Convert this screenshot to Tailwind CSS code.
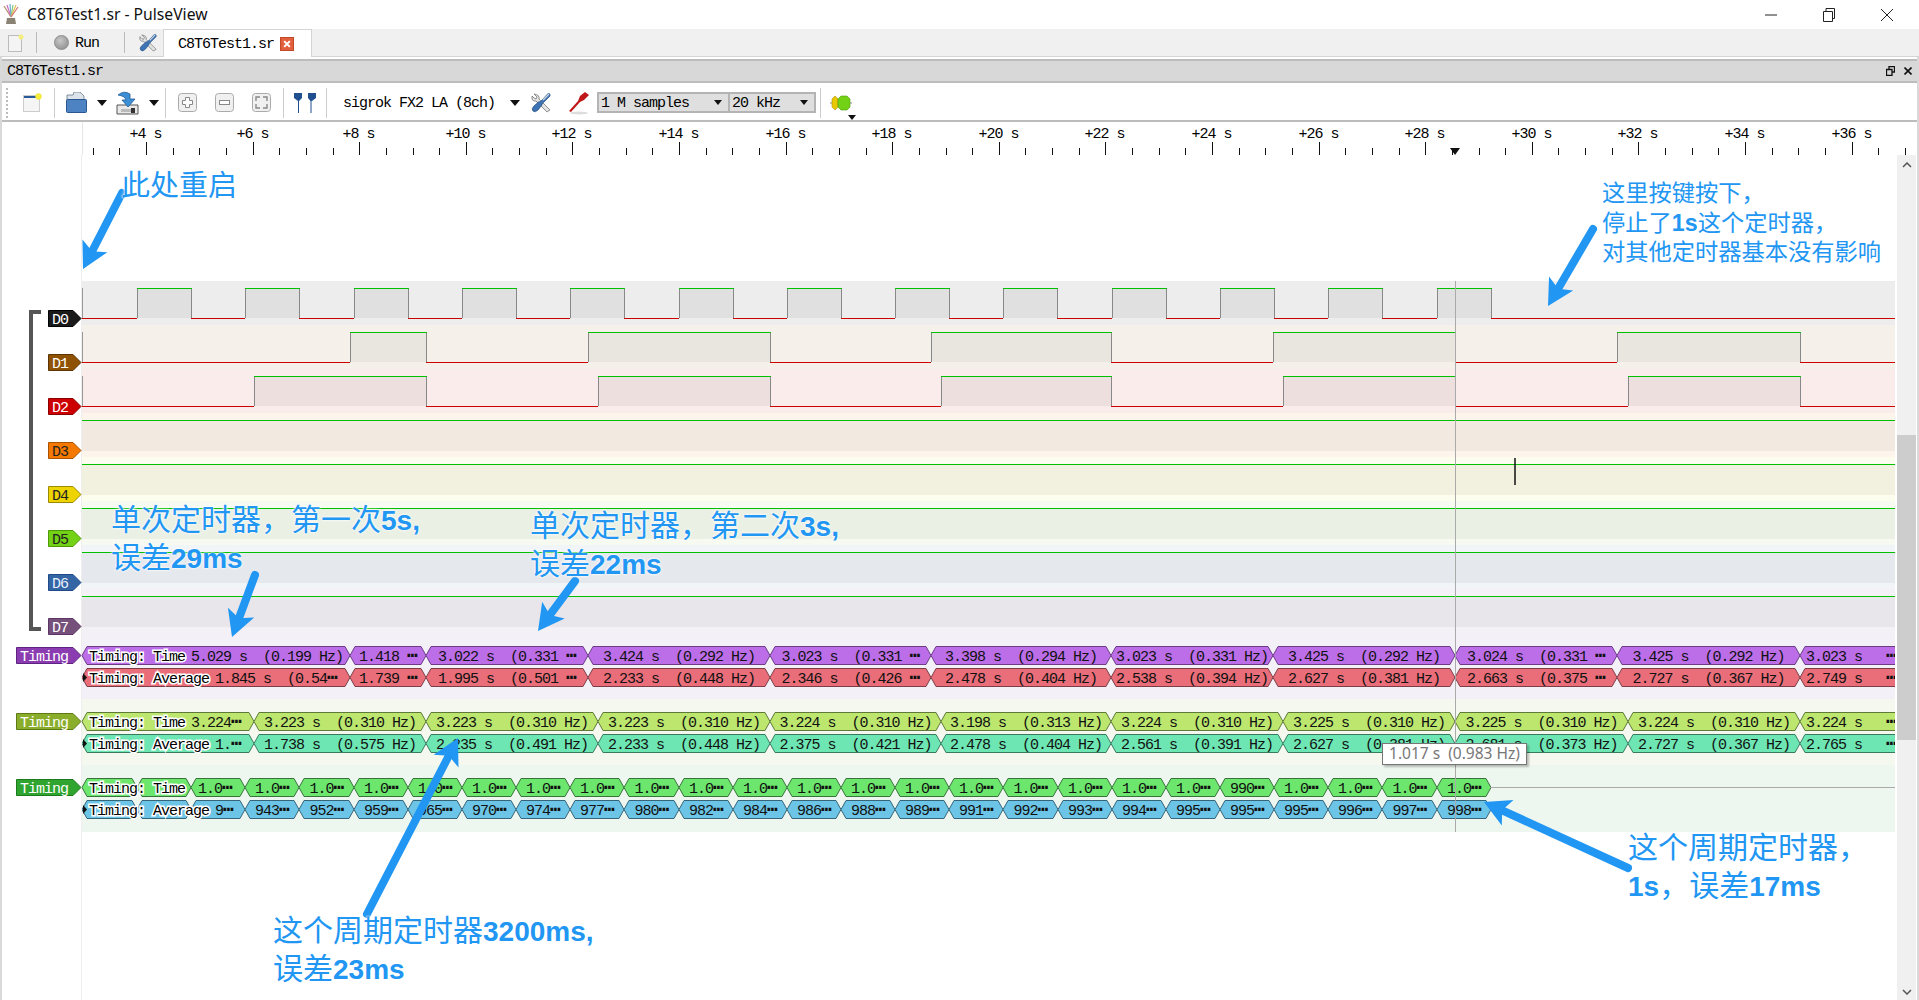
<!DOCTYPE html>
<html lang="zh">
<head>
<meta charset="UTF-8">
<title>C8T6Test1.sr - PulseView</title>
<script src="https://cdn.jsdelivr.net/npm/@tailwindcss/browser@4"></script>
</head>
<body class="bg-white">
<svg width="0" height="0" class="absolute">
  <defs>
    <symbol id="tools" viewBox="0 0 20 20">
      <path d="M3 1 L6 4 L5 6 L3 5 L1 3 Q0 7 3 8 L5 8 L16 19 L19 17 L8 6 Q9 2 3 1Z" fill="#e4e4e4" stroke="#777" stroke-width="0.8"/>
      <path d="M19 1 L17 0.5 L12 6 L9 9 L8 8.500 L3 13 Q0 16 2 18 Q4 20 7 17 L11 12 L11 11 L14 8 L19 3Z" fill="#3e74b5" stroke="#24507f" stroke-width="0.7"/>
      <path d="M18 1 L12 7" stroke="#cfd8e3" stroke-width="1.2"/>
    </symbol>
    <symbol id="caret" viewBox="0 0 10 6"><path d="M0 0H10L5 6Z" fill="#111"/></symbol>
  </defs>
</svg>

<div class="relative w-[1919px] h-[1000px] overflow-hidden flex flex-col bg-white text-black [font-family:'Liberation_Mono','DejaVu_Sans_Mono',monospace]">

  <!-- title bar -->
  <div class="h-[29px] flex items-center shrink-0">
    <svg class="ml-[3px] w-[16px] h-[21px]" viewBox="0 0 16 21">
      <path d="M8 13L1 2" stroke="#b98b6a" stroke-width="1.2"/>
      <path d="M8 13L4 1" stroke="#c86fc0" stroke-width="1.2"/>
      <path d="M8 13L7 0" stroke="#70a8d8" stroke-width="1.2"/>
      <path d="M8 13L10 1" stroke="#7fc77f" stroke-width="1.2"/>
      <path d="M8 13L13 1" stroke="#e0c050" stroke-width="1.2"/>
      <path d="M8 13L15 3" stroke="#d07070" stroke-width="1.2"/>
      <path d="M4 14H12L13 20H3Z" fill="#8a8272"/>
    </svg>
    <span class="ml-[8px] text-[15.700px] text-[#111] [font-family:'Noto_Sans',sans-serif]">C8T6Test1.sr - PulseView</span>
    <div class="ml-auto flex items-center mr-[26px] gap-[46px]">
      <svg class="w-[12px] h-[12px]" viewBox="0 0 12 12"><path d="M0 6H12" stroke="#222"/></svg>
      <svg class="w-[12px] h-[14px]" viewBox="0 0 12 14"><path d="M0.500 3.500H9.500V13.500H0.500ZM3 3V0.500H11.500V10.500H10" fill="none" stroke="#222"/></svg>
      <svg class="w-[12px] h-[12px]" viewBox="0 0 12 12"><path d="M0 0L12 12M12 0L0 12" stroke="#222"/></svg>
    </div>
  </div>

  <!-- tab bar -->
  <div class="h-[28px] shrink-0 flex items-stretch bg-[#f0f0f0] border-b border-[#d4d4d4] text-[15px] tracking-[-1px]">
    <div class="w-[37px] flex items-center pl-[8px] border-r border-[#bbb] my-[3px]">
      <svg class="w-[16px] h-[18px]" viewBox="0 0 16 18"><rect x="0.500" y="1.500" width="13" height="16" fill="#f4f4f4" stroke="#bbb"/><circle cx="13" cy="3" r="2.500" fill="#f4ee80"/></svg>
    </div>
    <div class="w-[88px] flex items-center gap-[6px] pl-[17px] border-r border-[#bbb] my-[3px]">
      <span class="w-[15px] h-[15px] rounded-full bg-[radial-gradient(circle_at_40%_35%,#c8c8c8,#868686)] border border-[#8a8a8a]"></span>
      <span class="pt-[3px]">Run</span>
    </div>
    <div class="w-[38px] flex items-center pl-[14px]">
      <svg class="w-[18px] h-[18px]"><use href="#tools"/></svg>
    </div>
    <div class="w-[149px] -mb-px bg-white border border-b-0 border-[#d4d4d4] flex items-center pl-[14px] gap-[6px]">
      <span class="pt-[3px]">C8T6Test1.sr</span>
      <span class="w-[14px] h-[14px] bg-[#e2603c] border border-[#c04a2a] flex items-center justify-center">
        <svg class="w-[8px] h-[8px]" viewBox="0 0 7 7"><path d="M1 1L6 6M6 1L1 6" stroke="#fff" stroke-width="1.800"/></svg>
      </span>
    </div>
  </div>

  <!-- dock title -->
  <div class="h-[24px] shrink-0 mx-[2px] mt-[2px] bg-[#d8d8d8] border-y-2 border-[#bcbcbc] flex items-center pl-[5px] text-[15px] tracking-[-1px]">
    <span class="pt-[3px]">C8T6Test1.sr</span>
    <div class="ml-auto flex items-center gap-[9px] mr-[5px]">
      <svg class="w-[9px] h-[10px]" viewBox="0 0 9 10"><path d="M0.500 3.500H6V9.500H0.500ZM3 3V0.500H8.500V6H6" fill="none" stroke="#111" stroke-width="1.300"/></svg>
      <svg class="w-[8px] h-[8px]" viewBox="0 0 8 8"><path d="M0.500 0.500L7.500 7.500M7.500 0.500L0.500 7.500" stroke="#111" stroke-width="1.600"/></svg>
    </div>
  </div>

  <!-- main toolbar -->
  <div class="h-[39px] shrink-0 pt-[2px] flex items-center border-b-2 border-[#bcbcbc] text-[15px] tracking-[-1px] relative">
    <div class="ml-[6px] w-[2px] h-[30px] border-l-2 border-dotted border-[#bbb]"></div>
    <svg class="ml-[15px] w-[19px] h-[20px]" viewBox="0 0 19 20"><rect x="0.500" y="2.500" width="16" height="16" fill="#f5f5f5" stroke="#ccc"/><rect x="1" y="3" width="15" height="2" fill="#2b5a9a"/><circle cx="15.500" cy="3.500" r="3" fill="#f6ee3a" stroke="#e8d840" stroke-width="0.500"/></svg>
    <div class="ml-[12px] w-px h-[30px] bg-[#ccc]"></div>
    <svg class="ml-[11px] w-[21px] h-[22px]" viewBox="0 0 21 22"><path d="M1 3H7L8 0H14L18 4V8H1Z" fill="#dde3ea" stroke="#6a7a8a" stroke-width="0.800"/><rect x="0.500" y="7.500" width="20" height="13" rx="1" fill="#4d82c3" stroke="#2a578f"/></svg>
    <svg class="ml-[10px] w-[10px] h-[6px]"><use href="#caret"/></svg>
    <svg class="ml-[9px] w-[23px] h-[24px]" viewBox="0 0 23 24"><path d="M1 14H22V23H1Z" fill="#e9e9e9" stroke="#555"/><rect x="5" y="18" width="13" height="3" fill="#bbb"/><rect x="15" y="17" width="4" height="5" fill="#333"/><path d="M2 4Q8 -1 14 3L14 8H19L12 16L6 9H10Q9 5 2 4Z" fill="#3c8fd5" stroke="#1f5c95" stroke-width="0.800"/></svg>
    <svg class="ml-[10px] w-[10px] h-[6px]"><use href="#caret"/></svg>
    <div class="ml-[6px] w-px h-[30px] bg-[#ccc]"></div>
    <svg class="ml-[12px] w-[19px] h-[19px]" viewBox="0 0 19 19"><rect x="0.500" y="0.500" width="18" height="18" rx="3" fill="#f0f0f0" stroke="#aaa"/><path d="M7.500 4.500H11.500V7.500H14.500V11.500H11.500V14.500H7.500V11.500H4.500V7.500H7.500Z" fill="#fff" stroke="#888"/></svg>
    <svg class="ml-[18px] w-[19px] h-[19px]" viewBox="0 0 19 19"><rect x="0.500" y="0.500" width="18" height="18" rx="3" fill="#f0f0f0" stroke="#aaa"/><rect x="4.500" y="7.500" width="10" height="4" fill="#fff" stroke="#888"/></svg>
    <svg class="ml-[18px] w-[19px] h-[19px]" viewBox="0 0 19 19"><rect x="0.500" y="0.500" width="18" height="18" rx="3" fill="#f0f0f0" stroke="#aaa"/><path d="M4 8V4H8M11 4H15V8M15 11V15H11M8 15H4V11" fill="none" stroke="#888" stroke-width="1.400"/></svg>
    <div class="ml-[12px] w-px h-[30px] bg-[#ccc]"></div>
    <svg class="ml-[10px] w-[22px] h-[20px]" viewBox="0 0 22 20"><path d="M0 0H8V5L5 8V20H4V8L0 5Z" fill="#1f4f8f"/><path d="M14 0H22V5L18 8L17.500 8V20H16.500V8L14 5Z" fill="#1f4f8f"/></svg>
    <div class="ml-[10px] w-px h-[30px] bg-[#ccc]"></div>
    <span class="ml-[16px] pt-[4px] whitespace-pre">sigrok FX2 LA (8ch)</span>
    <svg class="ml-[15px] w-[10px] h-[6px]"><use href="#caret"/></svg>
    <svg class="ml-[11px] w-[20px] h-[20px]"><use href="#tools"/></svg>
    <svg class="ml-[18px] w-[21px] h-[24px]" viewBox="0 0 21 24"><ellipse cx="10" cy="22" rx="9" ry="1.500" fill="#ddd"/><path d="M0 20L9 10L11 5L16 1L20 4L15 9L11 11L2 21Z" fill="#c01818"/></svg>
    <div class="ml-[7px] w-[133px] h-[21px] bg-[#dfdfdf] border-2 border-[#b4b4b4] flex items-center pl-[2px] pr-[6px] justify-between whitespace-pre"><span class="pt-[3px]">1 M samples</span><svg class="w-[8px] h-[5px]"><use href="#caret"/></svg></div>
    <div class="w-[86px] h-[21px] bg-[#dfdfdf] border-2 border-l-0 border-[#b4b4b4] flex items-center pl-[2px] pr-[6px] justify-between whitespace-pre"><span class="pt-[3px]">20 kHz</span><svg class="w-[8px] h-[5px]"><use href="#caret"/></svg></div>
    <div class="ml-[4px] w-px h-[30px] bg-[#ccc]"></div>
    <svg class="ml-[9px] w-[24px] h-[16px]" viewBox="0 0 24 16"><path d="M0 8H22" stroke="#888"/><path d="M5 1L8 4V12L5 15L2 12V4Z" fill="#e8c800" stroke="#b09000" stroke-width="0.600"/><path d="M11 1H17L20 4V12L17 15H11L8 12V4Z" fill="#73d216" stroke="#4e9a06" stroke-width="0.600"/></svg>
    <svg class="absolute left-[848px] top-[32px] w-[8px] h-[5px]"><use href="#caret"/></svg>
  </div>

  <!-- time ruler -->
  <svg id="ruler" class="shrink-0 text-[15px] tracking-[-1px]" width="1919" height="33" viewBox="0 122 1919 33"></svg>

  <!-- trace view + scrollbar -->
  <div class="flex flex-1 min-h-0">
    <svg id="view" class="shrink-0 text-[15px] tracking-[-1px]" width="1897" height="845" viewBox="0 155 1897 845"></svg>
    <div class="w-[19px] bg-[#f0f0f0] flex flex-col items-center relative">
      <svg class="mt-[7px] w-[10px] h-[6px]" viewBox="0 0 10 6"><path d="M1 5L5 1L9 5" fill="none" stroke="#555" stroke-width="1.500"/></svg>
      <div class="absolute left-0 right-0 top-[280px] h-[305px] bg-[#cdcdcd]"></div>
      <svg class="mt-auto mb-[5px] w-[10px] h-[6px]" viewBox="0 0 10 6"><path d="M1 1L5 5L9 1" fill="none" stroke="#555" stroke-width="1.500"/></svg>
    </div>
    <div class="w-[1px]"></div>
  </div>

  <!-- window borders -->
  <div class="absolute left-0 top-[57px] bottom-0 w-[2px] bg-[#d9d9d9]"></div>
  <div class="absolute right-0 top-[57px] bottom-0 w-[2px] bg-[#d9d9d9]"></div>

  <!-- hover tooltip -->
  <div class="absolute left-[1382px] top-[743px] w-[145px] h-[22px] bg-white border border-[#767676] shadow-[2px_2px_2px_rgba(0,0,0,0.25)] flex items-center justify-center whitespace-pre text-[15.500px] text-[#777] [font-family:'Noto_Sans',sans-serif]">1.017 s  (0.983 Hz)</div>

  <!-- mouse text cursor -->
  <svg class="absolute left-[1512px] top-[458px] w-[6px] h-[27px]" viewBox="0 0 6 27"><path d="M3 0V27" stroke="#111" stroke-width="1.500"/></svg>

  <!-- hand-drawn arrows over the capture -->
  <svg id="arrows" class="absolute inset-0 pointer-events-none" width="1919" height="1000" viewBox="0 0 1919 1000"></svg>

  <!-- hand-written notes -->
  <div class="[font-family:'Noto_Sans_CJK_SC','Noto_Sans',sans-serif] text-[#2196f3] [text-shadow:0_0_3px_#fff,0_0_2px_#fff]">
    <div class="absolute left-[121px] top-[162px] text-[29px] leading-[42px]">此处重启</div>
    <div class="absolute left-[1602px] top-[177px] text-[23.250px] leading-[29.500px] whitespace-nowrap">这里按键按下，<br>停止了<b class="font-bold leading-[0] [font-family:'Liberation_Sans',sans-serif]">1s</b>这个定时器，<br>对其他定时器基本没有影响</div>
    <div class="absolute left-[111px] top-[498px] text-[30px] leading-[38px] whitespace-nowrap">单次定时器，第一次<b class="font-bold leading-[0] text-[28px] [font-family:'Liberation_Sans',sans-serif]">5s,</b><br>误差<b class="font-bold leading-[0] text-[28px] [font-family:'Liberation_Sans',sans-serif]">29ms</b></div>
    <div class="absolute left-[530px] top-[504px] text-[30px] leading-[38px] whitespace-nowrap">单次定时器，第二次<b class="font-bold leading-[0] text-[28px] [font-family:'Liberation_Sans',sans-serif]">3s,</b><br>误差<b class="font-bold leading-[0] text-[28px] [font-family:'Liberation_Sans',sans-serif]">22ms</b></div>
    <div class="absolute left-[273px] top-[909px] text-[30px] leading-[38px] whitespace-nowrap">这个周期定时器<b class="font-bold leading-[0] text-[28px] [font-family:'Liberation_Sans',sans-serif]">3200ms,</b><br>误差<b class="font-bold leading-[0] text-[28px] [font-family:'Liberation_Sans',sans-serif]">23ms</b></div>
    <div class="absolute left-[1628px] top-[826px] text-[30px] leading-[38px] whitespace-nowrap">这个周期定时器，<br><b class="font-bold leading-[0] text-[28px] [font-family:'Liberation_Sans',sans-serif]">1s</b>，误差<b class="font-bold leading-[0] text-[28px] [font-family:'Liberation_Sans',sans-serif]">17ms</b></div>
  </div>
</div>

<script>
  // ruler: 4 divisions per 2 s, +4 s sits at x=146
  const pitch = 106.6;
  let ruler = '';
  for (let i = -3; i < 72; i++) {
    const x = Math.round(146 + i * pitch / 4) + 0.5;
    if (x < 85 || x > 1908) continue;
    const major = ((i % 4) + 4) % 4 === 0;
    ruler += `<path d="M${x} ${major ? 142 : 148}V155" stroke="#111"/>`;
    if (major) ruler += `<text x="${x - 1}" y="138" text-anchor="middle" xml:space="preserve">+${4 + i / 2} s</text>`;
  }
  ruler += '<path d="M1450 148H1460L1455 155Z" fill="#111"/><path d="M82.500 122V155" stroke="#e6e6e6"/>';
  document.getElementById('ruler').innerHTML = ruler;

  const LEFT = 82, RIGHT = 1895;
  const rect = (x, y, w, h, fill) => `<rect x="${x}" y="${y}" width="${w}" height="${h}" fill="${fill}"/>`;

  // channel colours: name, tag fill, tag border, tag text, row bg, band bg
  const channels = [
    ['D0', '#1a1a1a', '#000000', '#ffffff', '#ededed', '#ededed'],
    ['D1', '#8f5202', '#5c3500', '#ffffff', '#f5f1ea', '#f5f1ea'],
    ['D2', '#cc0000', '#8a0000', '#ffffff', '#faeceb', '#faeceb'],
    ['D3', '#f57900', '#a85300', '#222222', '#fdf5ec', '#f2e9e0'],
    ['D4', '#edd400', '#9a8a00', '#222222', '#fdfdee', '#f2f1e0'],
    ['D5', '#73d216', '#4e9a06', '#222222', '#f6faf0', '#ebf0e4'],
    ['D6', '#3465a4', '#204a87', '#e8f0ff', '#f2f5f8', '#e5e8ed'],
    ['D7', '#75507b', '#5c3566', '#ffffff', '#f3f1f5', '#e8e6ea'],
  ];
  // high spans per logic channel
  const d0High = [];
  for (let k = 0; k < 13; k++) d0High.push([137 + 108.3 * k, 191 + 108.3 * k]);
  const highs = [
    d0High,
    [[350, 426], [588, 770], [931, 1111], [1273, 1455], [1617, 1800]],
    [[254, 426], [598, 770], [941, 1111], [1283, 1455], [1628, 1800]],
  ];

  let bg = '', lines = '', tags = '';
  channels.forEach((c, i) => {
    const top = 281 + i * 44, hi = top + 7, lo = top + 37, mid = top + 37.5;
    bg += rect(LEFT, top, RIGHT - LEFT, 44, c[4]);
    if (i < 3) {
      let x = LEFT;
      lines += `<path d="M${LEFT + .5} ${hi}V${lo}" stroke="#999"/>`;
      highs[i].forEach(([a, b]) => {
        a = Math.round(a); b = Math.round(b);
        bg += rect(a, hi, b - a, lo - hi, i == 0 ? '#e0e0e0' : i == 1 ? '#e9e6df' : '#eddfdd');
        lines += `<path d="M${a + .5} ${hi}V${lo}M${b + .5} ${hi}V${lo}" stroke="#888"/>`;
        lines += `<path d="M${x} ${lo + .5}H${a}" stroke="#cc0000"/>`;
        lines += `<path d="M${a} ${hi + .5}H${b + 1}" stroke="#00c000"/>`;
        x = b;
      });
      lines += `<path d="M${x} ${lo + .5}H${RIGHT}" stroke="#cc0000"/>`;
    } else {
      bg += rect(LEFT, hi, RIGHT - LEFT, 31, c[5]);
      lines += `<path d="M${LEFT} ${hi + .5}H${RIGHT}" stroke="#00c000"/>`;
    }
    tags += `<path d="M48.500 ${mid - 8}H73L81 ${mid}L73 ${mid + 8}H48.500Z" fill="${c[1]}" stroke="${c[2]}"/>`;
    tags += `<text x="52" y="${mid + 5}" fill="${c[3]}">${c[0]}</text>`;
  });

  // decoder groups
  bg += rect(LEFT, 633, RIGHT - LEFT, 66, '#f3f0f7');
  bg += rect(LEFT, 699, RIGHT - LEFT, 66, '#f4f8ef');
  bg += rect(LEFT, 765, RIGHT - LEFT, 67, '#eef7ef');

  [[655.5, '#8a3cb0', '#5c2480'], [721.5, '#8aae2c', '#5e7a14'], [787.5, '#2fa52f', '#1b7a1b']].forEach(([c, fill, edge]) => {
    tags += `<path d="M16.500 ${c - 8}H73L81 ${c}L73 ${c + 8}H16.500Z" fill="${fill}" stroke="${edge}"/>`;
    tags += `<text x="20" y="${c + 5}" fill="#fff">Timing</text>`;
  });

  const rowA = [82, 350, 426, 588, 770, 931, 1111, 1273, 1455, 1617, 1800, 1990];
  const rowB = [82, 254, 426, 598, 770, 941, 1111, 1283, 1455, 1628, 1800, 1990];
  const rowC = [82];
  for (let k = 0; k < 26; k++) rowC.push(Math.round(137 + 54.15 * k));

  const DOTS = '<tspan font-size="18" font-weight="bold">\u22EF</tspan>';
  const hz = (s, f) => `${s} s  (${f} Hz)`;
  const rows = [
    { top: 646, edges: rowA, fill: '#bc6ee8', edge: '#6b3d85', label: 'Timing: Time', first: 191,
      texts: ['5.029 s  (0.199 Hz)', `1.418 ${DOTS}`, `3.022 s  (0.331 ${DOTS}`, hz('3.424', '0.292'), `3.023 s  (0.331 ${DOTS}`, hz('3.398', '0.294'), hz('3.023', '0.331'), hz('3.425', '0.292'), `3.024 s  (0.331 ${DOTS}`, hz('3.425', '0.292'), `3.023 s   ${DOTS}`] },
    { top: 668, edges: rowA, fill: '#e96e7a', edge: '#7d3d44', label: 'Timing: Average', first: 215,
      texts: [`1.845 s  (0.54${DOTS}`, `1.739 ${DOTS}`, `1.995 s  (0.501 ${DOTS}`, hz('2.233', '0.448'), `2.346 s  (0.426 ${DOTS}`, hz('2.478', '0.404'), hz('2.538', '0.394'), hz('2.627', '0.381'), `2.663 s  (0.375 ${DOTS}`, hz('2.727', '0.367'), `2.749 s   ${DOTS}`] },
    { top: 712, edges: rowB, fill: '#bce66e', edge: '#5f7a38', label: 'Timing: Time', first: 191,
      texts: [`3.224${DOTS}`, hz('3.223', '0.310'), hz('3.223', '0.310'), hz('3.223', '0.310'), hz('3.224', '0.310'), hz('3.198', '0.313'), hz('3.224', '0.310'), hz('3.225', '0.310'), hz('3.225', '0.310'), hz('3.224', '0.310'), `3.224 s   ${DOTS}`] },
    { top: 734, edges: rowB, fill: '#6ee6b4', edge: '#387a60', label: 'Timing: Average', first: 215,
      texts: [`1.${DOTS}`, hz('1.738', '0.575'), hz('2.235', '0.491'), hz('2.233', '0.448'), hz('2.375', '0.421'), hz('2.478', '0.404'), hz('2.561', '0.391'), hz('2.627', '0.381'), hz('2.681', '0.373'), hz('2.727', '0.367'), `2.765 s   ${DOTS}`] },
  ];
  const ones = [];
  for (let k = 0; k < 24; k++) ones.push(k == 19 ? '990' + DOTS : '1.0' + DOTS);
  const avgs = ['9', 943, 952, 959, 965, 970, 974, 977, 980, 982, 984, 986, 988, 989, 991, 992, 993, 994, 995, 995, 995, 996, 997, 998].map(v => v + DOTS);
  rows.push({ top: 778, edges: rowC, fill: '#6ce66c', edge: '#38733c', label: 'Timing: Time', first: 198, skip: 2, texts: ones });
  rows.push({ top: 800, edges: rowC, fill: '#6cc5e6', edge: '#36657a', label: 'Timing: Average', first: 215, skip: 2, texts: avgs });

  let ann = '';
  rows.forEach(r => {
    const t = r.top, b = t + 18, m = t + 9;
    const skip = r.skip || 0;
    for (let i = 0; i < r.edges.length - 1; i++) {
      const a = r.edges[i], z = r.edges[i + 1];
      ann += `<path d="M${a} ${m + .5}L${a + 5} ${t + .5}H${z - 5}L${z} ${m + .5}L${z - 5} ${b + .5}H${a + 5}Z" fill="${r.fill}" stroke="${r.edge}"/>`;
      const txt = r.texts[i - skip];
      if (i < skip || !txt) continue;
      if (i == skip) ann += `<text x="${r.first}" y="${m + 6}" xml:space="preserve" fill="#111">${txt}</text>`;
      else if (z > RIGHT) ann += `<text x="${a + 6}" y="${m + 6}" xml:space="preserve" fill="#111">${txt}</text>`;
      else ann += `<text x="${(a + z) / 2}" y="${m + 6}" text-anchor="middle" xml:space="preserve" fill="#111">${txt}</text>`;
    }
    if (r.label.endsWith('Average')) ann += `<path d="M83 ${m - 4}L87 ${m + .5}L83 ${m + 5}Z" fill="#111"/>`;
    ann += `<text x="89" y="${m + 6}" xml:space="preserve" fill="#000" stroke="#fff" stroke-width="3" paint-order="stroke">${r.label}</text>`;
  });
  ann += '<path d="M1490 787.500H1895" stroke="#aaa"/>';

  const bracket = '<path d="M41 312H31V629H41" fill="none" stroke="#555" stroke-width="4"/>';
  const paneEdge = '<path d="M81.500 155V1000" stroke="#eeeeee"/>';
  const cursor = '<path d="M1455.500 281V832" stroke="#aaa"/>';

  document.getElementById('view').innerHTML =
    `<defs><clipPath id="vp"><rect x="${LEFT}" y="155" width="${RIGHT - LEFT}" height="845"/></clipPath></defs>` +
    paneEdge + `<g clip-path="url(#vp)">${bg}${lines}${ann}${cursor}</g>` + bracket + tags;

  // arrows: [tailX, tailY, tipX, tipY]
  const arrows = [
    [122, 193, 83, 269],
    [1593, 229, 1548, 306],
    [255, 575, 232, 637],
    [575, 581, 538, 631],
    [367, 914, 458, 738],
    [1628, 868, 1484, 802],
  ];
  let arrowSvg = '';
  arrows.forEach(([x1, y1, x2, y2]) => {
    const dx = x2 - x1, dy = y2 - y1, len = Math.hypot(dx, dy);
    const ux = dx / len, uy = dy / len, nx = -uy, ny = ux;
    const bx = x2 - ux * 20, by = y2 - uy * 20;
    const ex = x2 - ux * 26, ey = y2 - uy * 26;
    arrowSvg += `<path d="M${x1} ${y1}L${bx} ${by}" stroke="#2196f3" stroke-width="8" stroke-linecap="round"/>`;
    arrowSvg += `<path d="M${x2} ${y2}L${ex + nx * 14} ${ey + ny * 14}L${bx} ${by}L${ex - nx * 14} ${ey - ny * 14}Z" fill="#2196f3"/>`;
  });
  document.getElementById('arrows').innerHTML = arrowSvg;
</script>
</body>
</html>
